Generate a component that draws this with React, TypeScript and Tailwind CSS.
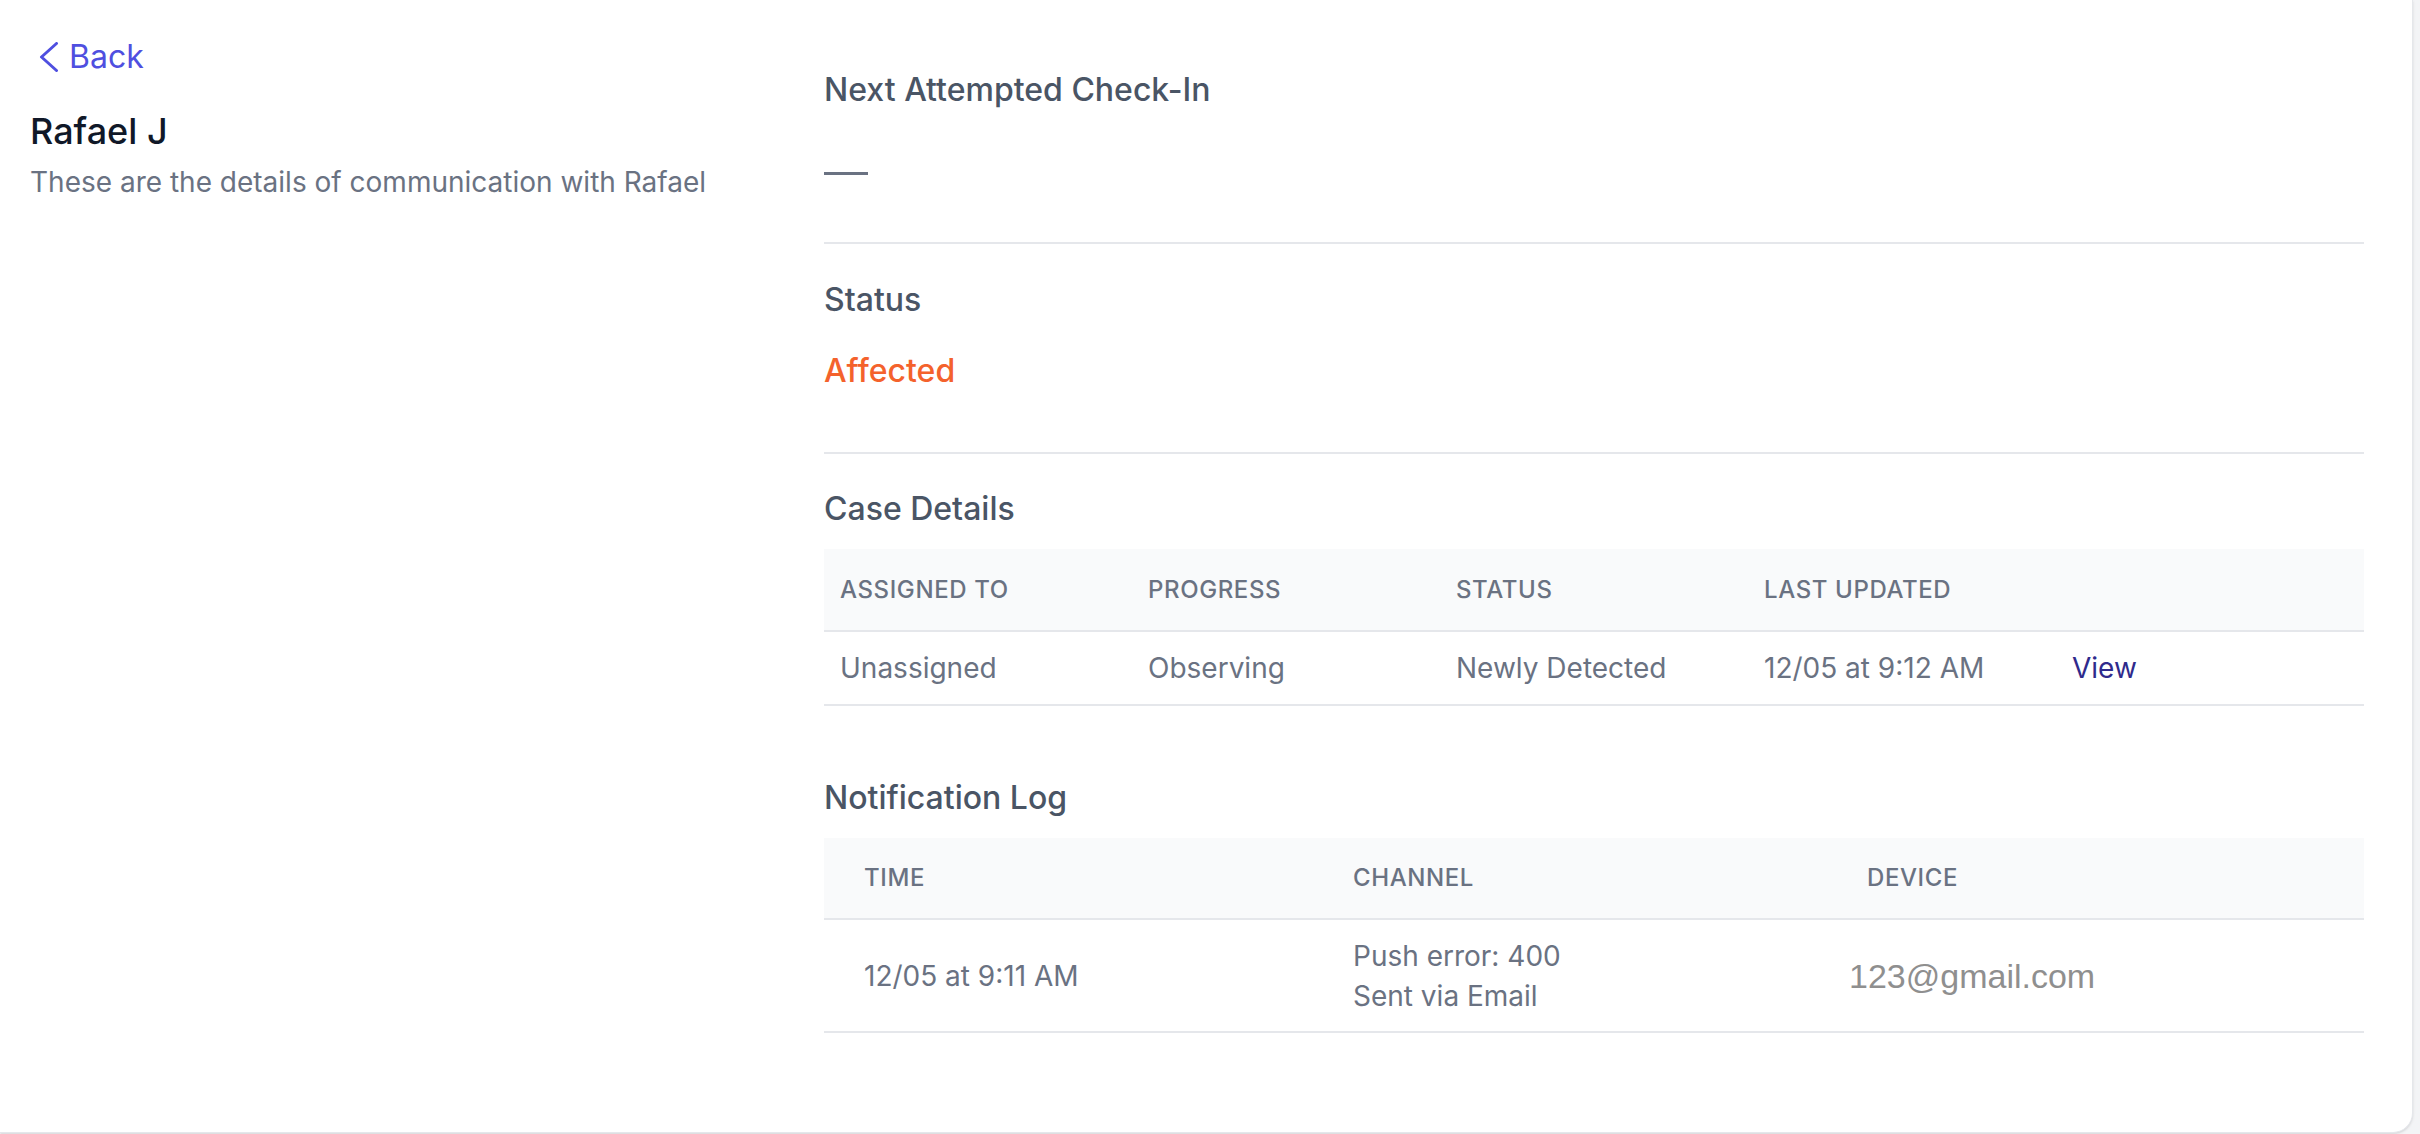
import React from "react";

interface CaseRow {
  assignedTo: string;
  progress: string;
  status: string;
  lastUpdated: string;
}

interface NotificationRow {
  time: string;
  channel: string[];
  device: string;
}

const caseRows: CaseRow[] = [
  {
    assignedTo: "Unassigned",
    progress: "Observing",
    status: "Newly Detected",
    lastUpdated: "12/05 at 9:12 AM",
  },
];

const notificationRows: NotificationRow[] = [
  {
    time: "12/05 at 9:11 AM",
    channel: ["Push error: 400", "Sent via Email"],
    device: "123@gmail.com",
  },
];

const ChevronLeft = () => (
  <svg width="20" height="30" viewBox="0 0 20 30" fill="none">
    <polyline
      points="17.5,1.5 2.5,15 17.5,28.5"
      stroke="currentColor"
      strokeWidth="3"
      strokeLinecap="round"
      strokeLinejoin="round"
    />
  </svg>
);

const SectionTitle = ({ children }: { children: React.ReactNode }) => (
  <h3 className="text-[32px] leading-[48px] font-medium text-gray-600">
    {children}
  </h3>
);

const CaseDetailsTable = () => (
  <div className="mt-[16px]">
    <div className="grid grid-cols-5 h-[83px] items-center bg-gray-50 border-b-2 border-gray-200">
      {["Assigned To", "Progress", "Status", "Last Updated", ""].map((h, i) => (
        <div
          key={i}
          className="px-[16px] text-[24px] font-medium uppercase tracking-wide text-gray-500"
        >
          {h}
        </div>
      ))}
    </div>
    {caseRows.map((row, i) => (
      <div
        key={i}
        className="grid grid-cols-5 h-[74px] items-center border-b-2 border-gray-200 text-[28px] text-gray-500"
      >
        <div className="px-[16px]">{row.assignedTo}</div>
        <div className="px-[16px]">{row.progress}</div>
        <div className="px-[16px]">{row.status}</div>
        <div className="px-[16px]">{row.lastUpdated}</div>
        <div className="px-[16px]">
          <a href="#" className="text-[#2f2a8c]">
            View
          </a>
        </div>
      </div>
    ))}
  </div>
);

const NotificationTable = () => (
  <div className="mt-[16px]">
    <div className="flex h-[82px] items-center bg-gray-50 border-b-2 border-gray-200 text-[24px] font-medium uppercase tracking-wide text-gray-500">
      <div className="w-[489px] shrink-0 px-[40px]">Time</div>
      <div className="w-[514px] shrink-0 px-[40px]">Channel</div>
      <div className="flex-1 px-[40px]">Device</div>
    </div>
    {notificationRows.map((row, i) => (
      <div
        key={i}
        className="flex h-[113px] items-center border-b-2 border-gray-200 text-[28px] leading-[40px] text-gray-500"
      >
        <div className="w-[489px] shrink-0 px-[40px]">{row.time}</div>
        <div className="w-[514px] shrink-0 px-[40px]">
          {row.channel.map((line) => (
            <div key={line}>{line}</div>
          ))}
        </div>
        <div className="flex-1 pl-[22px] font-['Liberation_Sans',Arial,sans-serif] text-[34px] text-[#8f8f8f]">
          {row.device}
        </div>
      </div>
    ))}
  </div>
);

export default function App() {
  return (
    <div className="h-[1134px] w-full bg-[#f3f4f6] font-['Inter',sans-serif] overflow-hidden">
      <div className="flex h-[1133px] w-[2413px] bg-white rounded-br-[20px] border-r border-b border-gray-200 shadow-sm">
        {/* contact summary */}
        <div className="w-[824px] shrink-0 pl-[30px] pt-[33px]">
          <a
            href="#"
            className="flex items-center gap-[10px] pl-[9px] text-[32px] leading-[48px] text-[#4f4fe0]"
          >
            <ChevronLeft />
            <span>Back</span>
          </a>
          <h1 className="mt-[22px] text-[36px] leading-[56px] font-medium text-gray-900">
            Rafael J
          </h1>
          <p className="mt-[3px] text-[28px] leading-[40px] text-gray-500">
            These are the details of communication with Rafael
          </p>
        </div>

        {/* detail sections */}
        <div className="flex-1 pr-[48px] pt-[66px]">
          <SectionTitle>Next Attempted Check-In</SectionTitle>
          <div className="mt-[58px] h-[3px] w-[44px] bg-gray-500" />
          <div className="mt-[67px] border-t-2 border-gray-200" />

          <div className="pt-[32px]">
            <SectionTitle>Status</SectionTitle>
            <p className="mt-[23px] text-[32px] leading-[48px] font-medium text-[#f4622c]">
              Affected
            </p>
          </div>
          <div className="mt-[57px] border-t-2 border-gray-200" />

          <div className="pt-[31px]">
            <SectionTitle>Case Details</SectionTitle>
            <CaseDetailsTable />
          </div>

          <div className="mt-[68px]">
            <SectionTitle>Notification Log</SectionTitle>
            <NotificationTable />
          </div>
        </div>
      </div>
    </div>
  );
}
